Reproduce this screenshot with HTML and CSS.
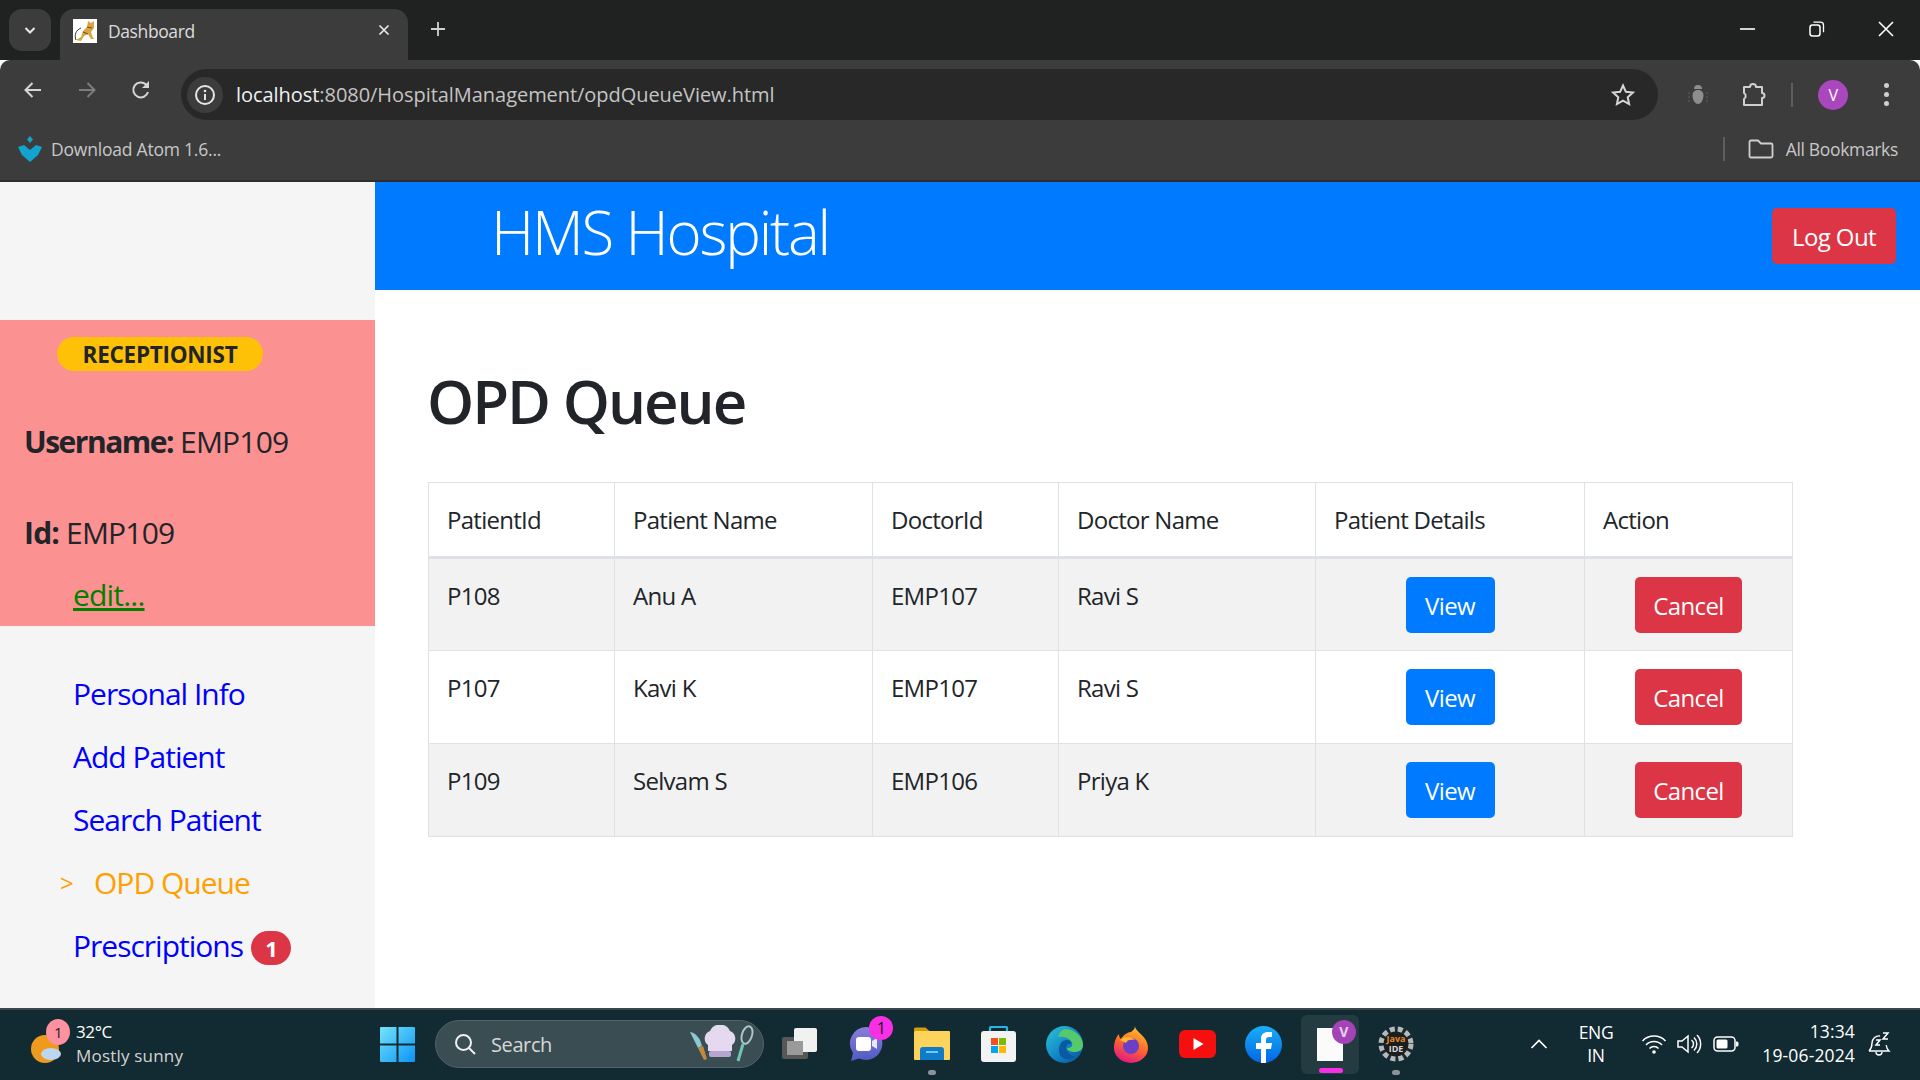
FILE: index.html
```html
<!doctype html>
<html lang="en">
<head>
    <meta charset="UTF-8">
    <title>Dashboard</title>
    <link rel="stylesheet" href="styles.css">
</head>
<body>
    <!-- Browser chrome -->
    <div class="tab-strip">
        <div class="tab-menu">
            <svg width="14" height="14" viewBox="0 0 14 14"><path d="M2.500 5l4.500 4.500L11.500 5" fill="none" stroke="#e8e8e8" stroke-width="2"/></svg>
        </div>
        <div class="tab">
            <svg class="favicon" width="24" height="24" viewBox="0 0 24 24"><rect width="24" height="24" fill="#fff"/><path d="M3 21l5-3 2-6 4-4 1-6 3 2 3-2 0 7-3 4 2 6 2 1-4 0-3-5-4 2-3 5z" fill="#d9a441"/><path d="M3 21c-2-5 0-10 5-12" fill="none" stroke="#333" stroke-width="1"/><path d="M14 8l5 1M10 13l5 2" stroke="#6b4a12" stroke-width="1"/></svg>
            <span class="tab-title">Dashboard</span>
            <svg class="tab-close" width="14" height="14" viewBox="0 0 14 14"><path d="M2.500 2.500l9 9M11.500 2.500l-9 9" stroke="#e8e8e8" stroke-width="1.700"/></svg>
        </div>
        <svg class="new-tab" width="16" height="16" viewBox="0 0 16 16"><path d="M8 1v14M1 8h14" stroke="#d0d0d0" stroke-width="1.800"/></svg>
        <div class="window-buttons">
            <svg width="16" height="16" viewBox="0 0 16 16"><path d="M0 8h15" stroke="#fff" stroke-width="1.600"/></svg>
            <svg width="16" height="16" viewBox="0 0 16 16"><rect x="1" y="4" width="10" height="11" rx="2.500" fill="none" stroke="#fff" stroke-width="1.500"/><path d="M4.500 1.200h7a3 3 0 0 1 3 3v7" fill="none" stroke="#fff" stroke-width="1.300"/></svg>
            <svg width="16" height="16" viewBox="0 0 16 16"><path d="M1 1l14 14M15 1L1 15" stroke="#fff" stroke-width="1.600"/></svg>
        </div>
    </div>

    <div class="toolbar">
        <svg class="nav-icon" width="20" height="20" viewBox="0 0 20 20"><path d="M18 10H3M9.500 3L2.500 10l7 7" fill="none" stroke="#d6d6d6" stroke-width="2"/></svg>
        <svg class="nav-icon" width="20" height="20" viewBox="0 0 20 20"><path d="M2 10h15M10.500 3l7 7-7 7" fill="none" stroke="#7d7d7d" stroke-width="2"/></svg>
        <svg class="nav-icon" width="20" height="22" viewBox="0 0 20 22"><path d="M17 13a7.500 7.500 0 1 1-2-7.500L17 8" fill="none" stroke="#d6d6d6" stroke-width="2"/><path d="M18 2v7h-7z" fill="#d6d6d6"/></svg>
        <div class="omnibox">
            <div class="site-info">
                <svg width="22" height="22" viewBox="0 0 22 22"><circle cx="11" cy="11" r="9" fill="none" stroke="#e6e6e6" stroke-width="2"/><path d="M11 10v6" stroke="#e6e6e6" stroke-width="2"/><circle cx="11" cy="7" r="1.300" fill="#e6e6e6"/></svg>
            </div>
            <div class="url"><span class="url-host">localhost</span>:8080/HospitalManagement/opdQueueView.html</div>
            <svg class="star" width="24" height="24" viewBox="0 0 24 24"><path d="M12 2.500l2.900 6.300 6.900.8-5.100 4.700 1.400 6.800-6.100-3.400-6.100 3.400 1.400-6.800-5.100-4.700 6.900-.8z" fill="none" stroke="#d6d6d6" stroke-width="2"/></svg>
        </div>
        <svg class="bug" width="22" height="24" viewBox="0 0 22 24"><path d="M7 6a4 4 0 0 1 8 0z" fill="#8d8d8d"/><path d="M5.500 12c0-3 2.500-5 5.500-5s5.500 2 5.500 5c0 5-2.500 9-5.500 9s-5.500-4-5.500-9z" fill="#8d8d8d"/><path d="M1 10h2M1 14h2M1 18h2M19 10h2M19 14h2M19 18h2" stroke="#5e5e5e" stroke-width="1"/></svg>
        <svg class="puzzle" width="26" height="26" viewBox="0 0 26 26"><path d="M3 5h6a3 3 0 0 1 6 0h6v6a2.500 2.500 0 0 1 0 5v7H3v-6a3.500 3.500 0 0 0 0-6z" fill="none" stroke="#cfcfcf" stroke-width="2" stroke-linejoin="round"/></svg>
        <div class="toolbar-divider"></div>
        <div class="avatar">V</div>
        <div class="kebab"><i></i><i></i><i></i></div>
    </div>

    <div class="bookmarks">
        <svg width="24" height="26" viewBox="0 0 24 26"><path d="M12 0l3 3.500-3 3.500-3-3.500zM0 11l6-2 6 5 6-5 6 2-4 8-8 7-8-7z" fill="#12a3d0"/></svg>
        <span class="bookmark-text">Download Atom 1.6...</span>
        <div class="bookmarks-right">
            <div class="bookmark-divider"></div>
            <svg width="26" height="20" viewBox="0 0 26 20"><path d="M1.500 3a1.500 1.500 0 0 1 1.500-1.500h7l3 3h10a1.500 1.500 0 0 1 1.500 1.500v11a1.500 1.500 0 0 1-1.500 1.500H3a1.500 1.500 0 0 1-1.500-1.500z" fill="none" stroke="#cfcfcf" stroke-width="1.800"/></svg>
            <span class="bookmark-text bookmark-all">All Bookmarks</span>
        </div>
    </div>

    <!-- Page -->
    <div class="page">
        <div class="sidebar">
            <div class="profile">
                <span class="role-badge">RECEPTIONIST</span>
                <div class="profile-line profile-name"><b>Username:</b> EMP109</div>
                <div class="profile-line profile-id"><b>Id:</b> EMP109</div>
                <a class="edit-link" href="#">edit...</a>
            </div>
            <ul class="side-nav">
                <li><a href="#">Personal Info</a></li>
                <li><a href="#">Add Patient</a></li>
                <li><a href="#">Search Patient</a></li>
                <li class="active"><span class="arrow">&gt;</span><a href="#">OPD Queue</a></li>
                <li><a href="#">Prescriptions</a><span class="count-badge">1</span></li>
            </ul>
        </div>

        <div class="main">
            <div class="topbar">
                <div class="brand">HMS Hospital</div>
                <button class="btn btn-danger btn-logout">Log Out</button>
            </div>
            <div class="content">
                <h1>OPD Queue</h1>
                <table class="queue-table">
                    <colgroup>
                        <col class="col-a"><col class="col-name"><col class="col-a"><col class="col-b"><col class="col-c"><col class="col-d">
                    </colgroup>
                    <thead>
                        <tr><th>PatientId</th><th>Patient Name</th><th>DoctorId</th><th>Doctor Name</th><th>Patient Details</th><th>Action</th></tr>
                    </thead>
                    <tbody>
                        <tr>
                            <td>P108</td><td>Anu A</td><td>EMP107</td><td>Ravi S</td>
                            <td class="center"><button class="btn btn-primary">View</button></td>
                            <td class="center"><button class="btn btn-danger btn-cancel">Cancel</button></td>
                        </tr>
                        <tr>
                            <td>P107</td><td>Kavi K</td><td>EMP107</td><td>Ravi S</td>
                            <td class="center"><button class="btn btn-primary">View</button></td>
                            <td class="center"><button class="btn btn-danger btn-cancel">Cancel</button></td>
                        </tr>
                        <tr>
                            <td>P109</td><td>Selvam S</td><td>EMP106</td><td>Priya K</td>
                            <td class="center"><button class="btn btn-primary">View</button></td>
                            <td class="center"><button class="btn btn-danger btn-cancel">Cancel</button></td>
                        </tr>
                    </tbody>
                </table>
            </div>
        </div>
    </div>

    <!-- Windows taskbar -->
    <div class="taskbar">
        <div class="weather">
            <div class="weather-icon">
                <svg width="36" height="34" viewBox="0 0 36 34"><circle cx="15" cy="18" r="14" fill="#ee9a1c"/><ellipse cx="21" cy="23" rx="10" ry="6" fill="#bcd6ee"/></svg>
                <span class="weather-badge">1</span>
            </div>
            <div class="weather-text">
                <div class="temp">32°C</div>
                <div class="sky">Mostly sunny</div>
            </div>
        </div>
        <svg class="win-logo" width="35" height="35" viewBox="0 0 35 35">
            <defs><linearGradient id="win" x1="0" y1="0" x2="1" y2="1"><stop offset="0" stop-color="#74e3fb"/><stop offset="1" stop-color="#0a94f5"/></linearGradient></defs>
            <path d="M0 1a1 1 0 0 1 1-1h15.500v16.500H0zM18.500 0H34a1 1 0 0 1 1 1v15.500H18.500zM0 18.500h16.500V35H1a1 1 0 0 1-1-1zM18.500 18.500H35V34a1 1 0 0 1-1 1H18.500z" fill="url(#win)"/>
        </svg>
        <div class="search">
            <svg width="24" height="24" viewBox="0 0 24 24"><circle cx="10.500" cy="10.500" r="7.500" fill="none" stroke="#f0f0f0" stroke-width="2"/><path d="M16 16l6 6" stroke="#f0f0f0" stroke-width="2"/></svg>
            <span class="search-text">Search</span>
            <svg class="chef" width="66" height="38" viewBox="0 0 66 38">
                <path d="M2 7l8 16 4-2c-2-8-6-13-12-14z" fill="#8cc9cf"/><path d="M10 23l5-2 4 13-3 1z" fill="#c48a3c"/>
                <path d="M20 20a8 8 0 0 1 2-14 11 11 0 0 1 20 0 8 8 0 0 1 2 14v6H20z" fill="#e4d9ee"/><rect x="21" y="26" width="22" height="6" rx="2" fill="#b7a5cf"/>
                <ellipse cx="59" cy="10" rx="5" ry="9" fill="none" stroke="#a9c6c9" stroke-width="2" transform="rotate(18 59 10)"/><path d="M55 19l-5 17" stroke="#6fc6b7" stroke-width="3"/>
            </svg>
        </div>
        <div class="apps">
            <div class="app"><svg width="36" height="34" viewBox="0 0 36 34"><rect x="0" y="10" width="26" height="22" rx="2" fill="#575757"/><rect x="12" y="1" width="23" height="24" rx="2" fill="#f1f1f1"/><rect x="5" y="14" width="16" height="14" fill="#9a9a9a"/></svg></div>
            <div class="app">
                <svg width="34" height="36" viewBox="0 0 34 36"><defs><linearGradient id="chat" x1="0" y1="0" x2="0" y2="1"><stop offset="0" stop-color="#8a7ed8"/><stop offset="1" stop-color="#4f5bc4"/></linearGradient></defs><path d="M17 1a16.500 16.500 0 1 1-7 31.500L2 35l2-8A16.500 16.500 0 0 1 17 1z" fill="url(#chat)"/><rect x="7" y="11" width="15" height="14" rx="3" fill="#fff"/><path d="M23 15l5-3v11l-5-3z" fill="#e8e6f8"/></svg>
                <span class="app-badge">1</span>
            </div>
            <div class="app app-running"><svg width="36" height="36" viewBox="0 0 36 36"><path d="M0 3a1.500 1.500 0 0 1 1.500-1.500h10l4 3.500H0z" fill="#d39e0a"/><rect x="0" y="5" width="36" height="29" rx="1" fill="#fcd45c"/><path d="M6 34V24a3 3 0 0 1 3-3h18a3 3 0 0 1 3 3v10z" fill="#0e7cc9"/><rect x="12" y="25" width="12" height="2" fill="#7cc4ef"/></svg></div>
            <div class="app"><svg width="35" height="36" viewBox="0 0 35 36"><path d="M9 7V2a1 1 0 0 1 1-1h15a1 1 0 0 1 1 1v5" fill="none" stroke="#28b4e8" stroke-width="2.200"/><rect x="0" y="5" width="35" height="31" rx="3" fill="#f3f3f3"/><rect x="10" y="12" width="7" height="7" fill="#f25022"/><rect x="18" y="12" width="7" height="7" fill="#7fba00"/><rect x="10" y="20" width="7" height="7" fill="#00a4ef"/><rect x="18" y="20" width="7" height="7" fill="#ffb900"/></svg></div>
            <div class="app"><svg width="37" height="37" viewBox="0 0 37 37"><defs><linearGradient id="edge" x1="0" y1="0" x2="1" y2="1"><stop offset="0" stop-color="#2cc5d8"/><stop offset="0.6" stop-color="#0f7fc4"/><stop offset="1" stop-color="#0a4f96"/></linearGradient></defs><circle cx="18.500" cy="18.500" r="18.500" fill="url(#edge)"/><path d="M19 3c9 0 18 7 18 16 0 5-4 7-8 7-5 0-8-2-8-4 4 0 6-2 5-5-2-5-8-7-14-6 2-5 4-8 7-8z" fill="#56c96a"/><path d="M13 24c0-6 3-10 8-10 3 0 5 2 4 4-6-1-8 8 4 13-5 4-16 3-16-7z" fill="#0b5aa0"/></svg></div>
            <div class="app"><svg width="34" height="38" viewBox="0 0 34 38"><defs><linearGradient id="fox" x1="0.700" y1="0" x2="0.300" y2="1"><stop offset="0" stop-color="#ffc233"/><stop offset="0.500" stop-color="#ff6a2a"/><stop offset="1" stop-color="#e31587"/></linearGradient></defs><path d="M21 1c0 6 13 10 13 22a17 15 0 0 1-34 0C0 17 2 12 5 9c0 3 1 4 2 5 2-4 7-7 10-7 2-2 4-3 4-6z" fill="url(#fox)"/><circle cx="17" cy="21" r="8" fill="#6b3fc6"/><path d="M6 15c4-4 11-4 15 0-5-1-8 0-9 3z" fill="#ffb52e"/></svg></div>
            <div class="app"><svg width="37" height="28" viewBox="0 0 37 28"><rect width="37" height="28" rx="6" fill="#f50f0f"/><path d="M14.500 8v12l10-6z" fill="#fff"/></svg></div>
            <div class="app"><svg width="37" height="37" viewBox="0 0 37 37"><defs><linearGradient id="fb" x1="0" y1="0" x2="0" y2="1"><stop offset="0" stop-color="#19aff9"/><stop offset="1" stop-color="#0266e3"/></linearGradient></defs><circle cx="18.500" cy="18.500" r="18.500" fill="url(#fb)"/><path d="M16 37V23h-5v-6h5v-4c0-5 3-7 7-7h4v5h-3c-2 0-3 1-3 3v3h6l-1 6h-5v14z" fill="#fff"/></svg></div>
            <div class="app app-active">
                <div class="note-page"></div>
                <span class="note-badge">V</span>
                <span class="active-bar"></span>
            </div>
            <div class="app app-running"><svg width="36" height="36" viewBox="0 0 36 36"><circle cx="18" cy="18" r="15" fill="none" stroke="#b8b8b8" stroke-width="5" stroke-dasharray="5 3"/><circle cx="18" cy="18" r="12" fill="#1d1d1d"/><text x="18" y="16" class="ide-text ide-java">Java</text><text x="18" y="26" class="ide-text ide-label">IDE</text></svg></div>
        </div>
        <div class="tray">
            <svg class="tray-chevron" width="18" height="12" viewBox="0 0 18 12"><path d="M1.500 10L9 2.500l7.500 7.500" fill="none" stroke="#fff" stroke-width="1.700"/></svg>
            <div class="lang"><div>ENG</div><div>IN</div></div>
            <svg width="26" height="22" viewBox="0 0 26 22"><path d="M1.500 8a16 16 0 0 1 23 0M5 12a11 11 0 0 1 16 0M8.500 15.500a6 6 0 0 1 9 0" fill="none" stroke="#fff" stroke-width="1.500"/><circle cx="13" cy="19" r="1.800" fill="#fff"/></svg>
            <svg width="26" height="22" viewBox="0 0 26 22"><path d="M1 8h4l6-5v16l-6-5H1z" fill="none" stroke="#fff" stroke-width="1.500"/><path d="M14.500 7a5 5 0 0 1 0 8M17 4.500a9 9 0 0 1 0 13M20 2a13 13 0 0 1 0 18" fill="none" stroke="#fff" stroke-width="1.500"/></svg>
            <svg width="26" height="18" viewBox="0 0 26 18"><rect x="1" y="2" width="21" height="14" rx="3.500" fill="none" stroke="#fff" stroke-width="1.500"/><rect x="3.500" y="4.500" width="11" height="9" rx="1.500" fill="#fff"/><path d="M23 6.500h1a1.500 1.500 0 0 1 1.500 1.500v2a1.500 1.500 0 0 1-1.500 1.500h-1z" fill="#fff"/></svg>
            <div class="clock"><div>13:34</div><div>19-06-2024</div></div>
            <svg class="bell" width="24" height="26" viewBox="0 0 24 26"><path d="M2 20c2-2 3-4 3-8a7 7 0 0 1 8-7M2 20h20c-1.500-1.500-2.500-3-2.800-6M9 21a3 3 0 0 0 6 0" fill="none" stroke="#fff" stroke-width="1.400"/><path d="M9 9h4l-4 5h4M16 2h5l-5 6h5" fill="none" stroke="#fff" stroke-width="1.500"/></svg>
        </div>
    </div>
</body>
</html>
```
FILE: styles.css
```css
* {
    box-sizing: border-box;
}

html, body {
    margin: 0;
    padding: 0;
    height: 1080px;
    overflow: hidden;
}

body {
    display: flex;
    flex-direction: column;
    font-family: "Open Sans", "Noto Sans", sans-serif;
    letter-spacing: -0.4px;
    color: #212529;
    background: #fff;
}

/* Browser chrome */
.tab-strip {
    display: flex;
    align-items: flex-end;
    height: 60px;
    background: #202221;
    position: relative;
}

.tab-menu {
    display: flex;
    align-items: center;
    justify-content: center;
    width: 42px;
    height: 42px;
    margin: 0 9px 9px 9px;
    border-radius: 13px;
    background: #3c3c3c;
}

.tab {
    display: flex;
    align-items: center;
    width: 348px;
    height: 51px;
    padding: 0 13px;
    border-radius: 14px 14px 0 0;
    background: #3c3c3c;
}

.favicon {
    margin-bottom: 8px;
}

.tab-title {
    flex: 1;
    margin-left: 11px;
    margin-bottom: 8px;
    font-size: 17.500px;
    color: #dcdcdc;
}

.tab-close {
    margin-bottom: 10px;
    margin-right: 4px;
}

.new-tab {
    margin: 0 0 23px 22px;
}

.window-buttons {
    display: flex;
    gap: 53px;
    margin: 0 26px 23px auto;
}

.toolbar {
    display: flex;
    align-items: center;
    height: 60px;
    padding-left: 23px;
    background: #3c3c3c;
    border-radius: 10px 10px 0 0;
}

.nav-icon {
    margin-right: 34px;
}

.nav-icon:nth-child(3) {
    margin-right: 30px;
}

.omnibox {
    display: flex;
    align-items: center;
    width: 1477px;
    height: 51px;
    margin-top: 9px;
    padding: 0 23px 0 6px;
    border-radius: 26px;
    background: #282828;
}

.site-info {
    display: flex;
    align-items: center;
    justify-content: center;
    width: 36px;
    height: 36px;
    border-radius: 50%;
    background: #3c3c3c;
}

.url {
    flex: 1;
    margin-left: 13px;
    font-size: 20px;
    letter-spacing: -0.05px;
    color: #c4c4c4;
}

.url-host {
    color: #f0f0f0;
}

.bug {
    margin: 9px 0 0 29px;
}

.puzzle {
    margin: 9px 0 0 32px;
}

.toolbar-divider {
    width: 2px;
    height: 24px;
    margin: 9px 0 0 24px;
    background: #5e5e5e;
}

.avatar {
    display: flex;
    align-items: center;
    justify-content: center;
    width: 30px;
    height: 30px;
    margin: 9px 0 0 25px;
    border-radius: 50%;
    background: #aa47bc;
    color: #fff;
    font-size: 16px;
}

.kebab {
    display: flex;
    flex-direction: column;
    gap: 4px;
    margin: 9px 0 0 36px;
}

.kebab i {
    display: block;
    width: 5px;
    height: 5px;
    border-radius: 50%;
    background: #d0d0d0;
}

.bookmarks {
    display: flex;
    align-items: center;
    height: 62px;
    padding: 0 22px 2px 18px;
    background: #3c3c3c;
    border-bottom: 2px solid #2e2e2e;
    gap: 9px;
}

.bookmark-text {
    font-size: 17.500px;
    letter-spacing: -0.21px;
    color: #c8c8c8;
}

.bookmark-all {
    letter-spacing: -0.33px;
}

.bookmarks-right {
    display: flex;
    align-items: center;
    margin-left: auto;
    gap: 12px;
}

.bookmark-divider {
    width: 2px;
    height: 24px;
    margin-right: 11px;
    background: #5e5e5e;
}

/* Page */
.page {
    flex: 1;
    display: flex;
    min-height: 0;
}

.sidebar {
    flex: 0 0 375px;
    padding-top: 138px;
    background: #f5f5f5;
}

.profile {
    height: 306px;
    padding: 17px 0 0 24px;
    background: #fc9191;
    font-size: 30px;
    letter-spacing: -0.8px;
}

.role-badge {
    display: block;
    width: 206px;
    height: 34px;
    margin-left: 33px;
    border-radius: 17px;
    background: #ffc107;
    font-size: 22.500px;
    font-weight: 700;
    letter-spacing: -0.27px;
    line-height: 36px;
    text-align: center;
}

.profile-line {
    line-height: 45px;
}

.profile-name {
    margin-top: 48px;
}

.profile-name b {
    letter-spacing: -1.5px;
}

.profile-id {
    margin-top: 46px;
}

.edit-link {
    display: block;
    width: max-content;
    margin: 17px 0 0 49px;
    line-height: 45px;
    color: #008000;
}

.side-nav {
    list-style: none;
    margin: 0;
    padding: 45px 0 0 73px;
    font-size: 30px;
    letter-spacing: -1px;
}

.side-nav li {
    position: relative;
    display: flex;
    align-items: center;
    height: 45px;
    margin-bottom: 18px;
}

.side-nav a {
    color: #0000ff;
    text-decoration: none;
}

.side-nav .active {
    padding-left: 21px;
}

.side-nav .active a {
    color: #ffa000;
}

.arrow {
    position: absolute;
    left: -13px;
    top: 0;
    font-size: 24px;
    line-height: 45px;
    color: #ffa000;
}

.count-badge {
    width: 40px;
    height: 34px;
    margin: 4px 0 0 8px;
    border-radius: 17px;
    background: #dc3545;
    color: #fff;
    font-size: 22px;
    font-weight: 700;
    line-height: 34px;
    text-align: center;
}

.main {
    flex: 1;
    min-width: 0;
}

.topbar {
    display: flex;
    align-items: center;
    justify-content: space-between;
    height: 108px;
    padding: 0 24px 0 116px;
    background: #007bff;
}

.brand {
    margin-bottom: 8px;
    font-size: 60px;
    font-weight: 300;
    letter-spacing: -2.2px;
    color: #fff;
}

.content {
    padding: 76px 128px 0 53px;
}

h1 {
    margin: 0 0 46px -1px;
    font-size: 60px;
    font-weight: 600;
    letter-spacing: -2px;
    line-height: 70px;
}

.queue-table {
    width: 1364px;
    table-layout: fixed;
    border-collapse: collapse;
    font-size: 24px;
    letter-spacing: -0.72px;
}

.col-a { width: 186px; }
.col-name { width: 258px; }
.col-b { width: 257px; }
.col-c { width: 269px; }
.col-d { width: 208px; }

.queue-table th,
.queue-table td {
    padding: 18px;
    border: 1px solid #dee2e6;
    font-weight: 400;
    line-height: 36px;
    text-align: left;
    vertical-align: top;
}

.queue-table th {
    height: 75px;
    padding-top: 19px;
    border-bottom-width: 3px;
}

.queue-table td {
    height: 93px;
    padding-top: 19px;
}

.queue-table tbody tr:nth-child(odd) {
    background: #f2f2f2;
}

.queue-table .center {
    padding: 18px 18px 0;
    text-align: center;
}

.btn {
    width: 89px;
    height: 56px;
    padding: 0;
    border: 0;
    border-radius: 5px;
    font-family: inherit;
    font-size: 24px;
    letter-spacing: -0.6px;
    color: #fff;
}

.btn-primary {
    background: #007bff;
}

.btn-danger {
    background: #dc3545;
}

.btn-cancel {
    width: 107px;
}

.btn-logout {
    width: 124px;
}

/* Windows taskbar */
.taskbar {
    display: flex;
    align-items: center;
    height: 72px;
    flex: 0 0 72px;
    padding-bottom: 2px;
    background: #122a31;
    border-top: 2px solid #38474b;
    color: #fff;
}

.weather {
    display: flex;
    width: 380px;
    padding-left: 30px;
    align-items: center;
}

.weather-icon {
    position: relative;
    width: 46px;
    height: 46px;
    padding-top: 10px;
}

.weather-badge {
    position: absolute;
    left: 16px;
    top: -2px;
    width: 24px;
    height: 26px;
    border-radius: 50%;
    background: #fc919f;
    color: #222;
    font-size: 15px;
    line-height: 26px;
    text-align: center;
}

.temp {
    font-size: 17px;
    line-height: 24px;
}

.sky {
    font-size: 17px;
    letter-spacing: 0.2px;
    line-height: 24px;
    color: #d4d4d4;
}

.win-logo {
    flex: none;
    margin-right: 20px;
}

.search {
    display: flex;
    align-items: center;
    flex: none;
    width: 329px;
    height: 48px;
    padding: 0 9px 0 17px;
    border-radius: 24px;
    border: 1px solid #50636a;
    background: #394d53;
}

.search-text {
    flex: 1;
    margin-left: 14px;
    font-size: 20px;
    color: #d8d8d8;
}

.apps {
    display: flex;
    margin-left: 3px;
}

.app {
    position: relative;
    display: flex;
    align-items: center;
    justify-content: center;
    width: 66.200px;
    height: 59px;
}

.ide-text {
    font-size: 9px;
    font-weight: 700;
    letter-spacing: 0;
    text-anchor: middle;
}

.ide-java {
    fill: #e08a2a;
}

.ide-label {
    fill: #d8d8d8;
}

.app-running::after {
    content: "";
    position: absolute;
    left: 50%;
    bottom: -1px;
    width: 8px;
    height: 5px;
    margin-left: -4px;
    border-radius: 3px;
    background: #8a9498;
}

.app-badge {
    position: absolute;
    left: 36px;
    top: 1px;
    width: 24px;
    height: 24px;
    border-radius: 50%;
    background: #f92fe6;
    color: #1a1a1a;
    font-size: 16px;
    line-height: 24px;
    text-align: center;
}

.app-active {
    width: 58px;
    margin: 0 4px;
    border-radius: 6px;
    background: #253b42;
}

.note-page {
    width: 26px;
    height: 33px;
    background: #fbfbfb;
}

.note-badge {
    position: absolute;
    right: 3px;
    top: 5px;
    width: 24px;
    height: 24px;
    border-radius: 50%;
    background: #a443b8;
    color: #e8d3ee;
    font-size: 14px;
    font-weight: 700;
    line-height: 24px;
    text-align: center;
}

.active-bar {
    position: absolute;
    left: 18px;
    bottom: 1px;
    width: 24px;
    height: 5px;
    border-radius: 3px;
    background: #f92fe6;
}

.tray {
    display: flex;
    align-items: center;
    margin-left: auto;
    padding-right: 29px;
}

.tray-chevron {
    margin-right: 26px;
}

.lang {
    width: 44px;
    margin-right: 23px;
    font-size: 17.500px;
    line-height: 23px;
    text-align: center;
}

.tray svg + svg {
    margin-left: 10px;
}

.clock {
    width: 100px;
    margin-left: 16px;
    margin-bottom: 2px;
    font-size: 17.500px;
    letter-spacing: 0.14px;
    line-height: 24px;
    text-align: right;
}

.tray .bell {
    margin-left: 12px;
}
```
